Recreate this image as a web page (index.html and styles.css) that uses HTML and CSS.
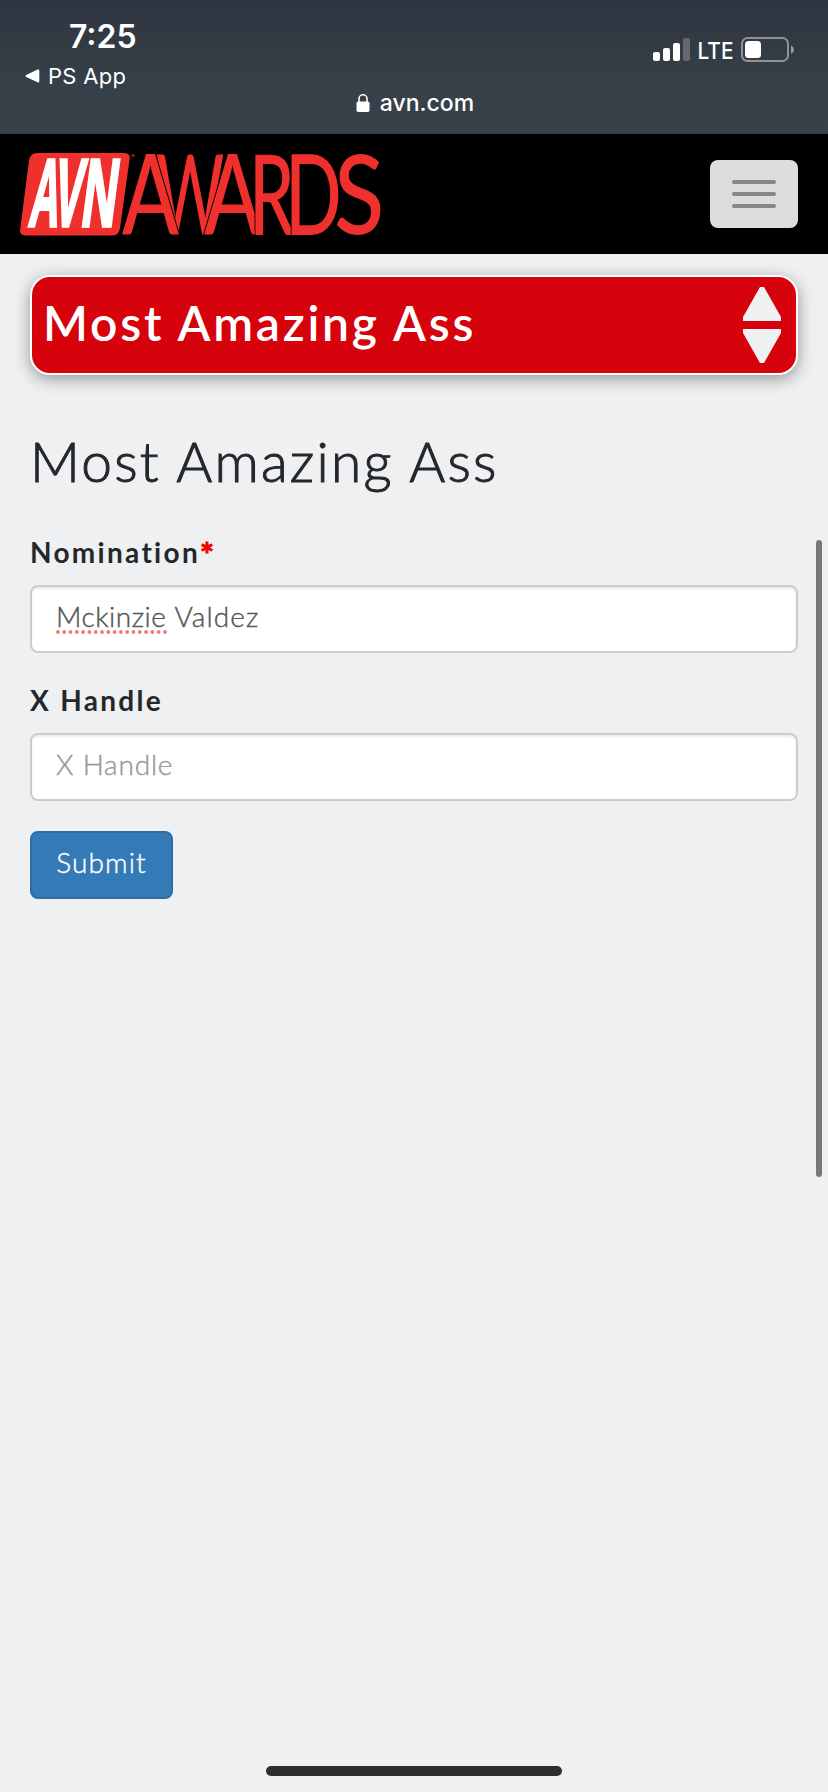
FILE: index.html
```html
<!DOCTYPE html>
<html lang="en">
<head>
<meta charset="utf-8">
<title>AVN Awards</title>
<link rel="stylesheet" href="styles.css">
</head>
<body>
<div class="screen">
  <header class="status">
    <div class="status-left">
      <div class="clock">7:25</div>
      <div class="back">
        <svg width="15" height="14" viewBox="0 0 15 14"><path d="M1.200 6.100 12.600.6Q14.300 0 14.300 1.700V12.300Q14.300 14 12.600 13.300L1.200 7.900Q-.4 7 1.200 6.100Z" fill="#fff"/></svg>
        <span class="back-text">PS App</span>
      </div>
    </div>
    <div class="url">
      <svg width="14" height="18" viewBox="0 0 14 18"><rect x="0.500" y="7.500" width="13" height="10.500" rx="1.800" fill="#fff"/><path d="M3 8V4.800a4 4 0 0 1 8 0V8" fill="none" stroke="#fff" stroke-width="1.600"/></svg>
      <span class="url-text">avn.com</span>
    </div>
    <svg class="indicators" width="144" height="28" viewBox="0 0 144 28">
      <g fill="#fff">
        <rect x="1" y="16" width="7" height="9" rx="2"/>
        <rect x="11" y="12" width="7" height="13" rx="2"/>
        <rect x="21" y="7" width="7" height="18" rx="2"/>
        <rect x="31" y="2" width="7" height="23" rx="2" opacity=".23"/>
        <text class="lte" x="45.500" y="23" textLength="36" lengthAdjust="spacingAndGlyphs">LTE</text>
        <rect x="93" y="5" width="16" height="17" rx="3.500"/>
        <path d="M139 9.500q3 1.500 3 4.200t-3 4.200z" opacity=".5"/>
      </g>
      <rect x="90" y="2" width="46" height="23" rx="5.500" fill="none" stroke="#fff" stroke-opacity=".45" stroke-width="2"/>
    </svg>
  </header>

  <nav class="navbar">
    <svg class="logo" width="364" height="86" viewBox="18 152 364 86">
      <path d="M37 154H124Q131 154 129.500 161L120 229Q119 236.500 112 236.500H26Q19 236.500 20.200 230L29 162Q30 154 37 154Z" fill="#f0302c"/>
      <circle cx="133" cy="156.500" r="1.600" fill="#8c2020"/>
      <g class="logo-avn">
        <text transform="translate(27.500 227) skewX(-7.500) scale(.43 1)">A</text>
        <text transform="translate(51.500 227) skewX(-7.500) scale(.44 1)">V</text>
        <text transform="translate(79.500 227) skewX(-7.500) scale(.5 1)">N</text>
      </g>
      <g class="logo-awards">
        <text transform="translate(156 236) scale(.58 1)">W</text>
        <text transform="translate(122 236) scale(.74 1)">A</text>
        <text transform="translate(204 236) scale(.74 1)">A</text>
        <text transform="translate(249 236) scale(.64 1)">R</text>
        <text transform="translate(285 236) scale(.66 1)">D</text>
        <text transform="translate(334 235) scale(.82 .97)">S</text>
      </g>
    </svg>
    <button class="toggle" aria-label="Menu"><span class="bar"></span><span class="bar"></span><span class="bar"></span></button>
  </nav>

  <main class="content">
    <div class="category">
      <span class="category-text">Most Amazing Ass</span>
      <svg width="38" height="76" viewBox="0 0 38 76" fill="#eff0f2"><path d="M17 0h4l17 30v4H0v-4zM0 42h38v4L21 76h-4L0 46z"/></svg>
    </div>
    <h1 class="title">Most Amazing Ass</h1>
    <form class="form">
      <div class="label"><span class="label-nom">Nomination</span><span class="req">*</span></div>
      <div class="field"><span class="misspelled">Mckinzie</span><span class="surname">Valdez</span></div>
      <div class="label"><span class="label-x">X Handle</span></div>
      <div class="field"><span class="placeholder">X Handle</span></div>
      <button class="submit" type="button"><span class="submit-text">Submit</span></button>
    </form>
  </main>
  <div class="scrollbar"></div>
  <div class="home"></div>
</div>
</body>
</html>
```
FILE: styles.css
```css
* { box-sizing: border-box; }
body { margin: 0; background: #eff0f2; font-family: Lato, sans-serif; color: #25282b; }
svg { display: block; flex: none; overflow: visible; }
.screen { position: relative; width: 828px; height: 1792px; overflow: hidden; }

.status { display: grid; grid-template-columns: 1fr auto 1fr; height: 134px; color: #fff; font-family: Inter, sans-serif; background: linear-gradient(#2f3444 0, #323943 25%, #364049 65%, #384149 98%, #373a40); }
.status-left { padding: 18px 0 0 25px; }
.clock { margin-left: 44px; font-size: 32px; font-weight: 600; line-height: 38px; }
.back { display: flex; align-items: center; gap: 8px; height: 30px; margin-top: 5px; }
.back-text { font-size: 22px; letter-spacing: .3px; line-height: 30px; }
.url { display: flex; align-self: end; align-items: center; gap: 10px; height: 30px; margin: 0 0 16px 2px; }
.url-text { font-size: 23px; font-weight: 500; line-height: 30px; }
.indicators { justify-self: end; margin: 36px 32px 0 0; }
.lte { font: 500 23.500px Inter, sans-serif; }

.navbar { display: flex; align-items: center; justify-content: space-between; height: 120px; padding: 0 30px 0 18px; background: #000; }
.logo-avn { font: 700 96px "Liberation Sans", sans-serif; fill: #fff; stroke: #fff; stroke-width: 3.500; }
.logo-awards { font: 500 113px Lato, sans-serif; fill: #f0302c; stroke: #000; stroke-width: 2.500; paint-order: stroke; }
.toggle { display: flex; flex-direction: column; align-items: center; justify-content: center; gap: 8px; width: 88px; height: 68px; padding: 0; border: 0; border-radius: 8px; background: #ddd; }
.bar { width: 44px; height: 4px; border-radius: 2px; background: #888; }

.content { padding: 21px 30px 0; }
.category { display: flex; align-items: center; justify-content: space-between; height: 100px; padding: 0 15px 0 11px; border: 2px solid #fff; border-radius: 20px; background: #d6020c; box-shadow: 0 4px 16px rgba(0,0,0,.38); color: #fff; }
.category-text { padding-bottom: 5px; font-size: 48px; font-weight: 600; letter-spacing: 2.800px; line-height: 56px; }
.title { margin: 53px 0 38px; font-size: 55px; font-weight: 300; letter-spacing: 2.250px; line-height: 66px; white-space: nowrap; -webkit-text-stroke: 1px #25282b; }
.form { display: flex; flex-direction: column; align-items: flex-start; }
.label { display: flex; height: 40px; margin-bottom: 13px; font-size: 28px; font-weight: 700; line-height: 40px; }
.label-nom, .label-x { letter-spacing: 2.300px; }
.req { position: relative; top: 2px; color: #f00000; font-size: 33px; -webkit-text-stroke: 1px #f00000; }
.field { display: flex; align-items: center; gap: 8px; width: 100%; height: 68px; margin-bottom: 27px; padding: 0 24px 6px; border: 2px solid #ccc; border-radius: 8px; background: #fff; box-shadow: inset 0 2px 2px rgba(0,0,0,.075); color: #555; font-size: 28px; font-weight: 300; line-height: 34px; -webkit-text-stroke: .4px; }
.misspelled { position: relative; letter-spacing: .5px; }
.surname { letter-spacing: 1.100px; }
.misspelled::after { content: ""; position: absolute; left: 0; top: 31px; width: 112px; height: 4px; background: radial-gradient(circle at 2px 2px, #f07a76 1.600px, transparent 2.100px) 0 0 / 6.300px 4px repeat-x; }
.placeholder { color: #999; letter-spacing: .8px; }
.submit { display: flex; align-items: center; justify-content: center; width: 143px; height: 68px; margin-top: 3px; padding: 0 0 6px; border: 2px solid #2e6da4; border-radius: 8px; background: #337ab7; color: #fff; font: 300 28px/34px Lato, sans-serif; letter-spacing: 1.100px; -webkit-text-stroke: .4px; }
.scrollbar { position: absolute; left: 816px; top: 540px; width: 6px; height: 637px; border-radius: 3px; background: #77787a; }
.home { position: absolute; left: 266px; top: 1766px; width: 296px; height: 10px; border-radius: 5px; background: #2e2e2f; }
```
